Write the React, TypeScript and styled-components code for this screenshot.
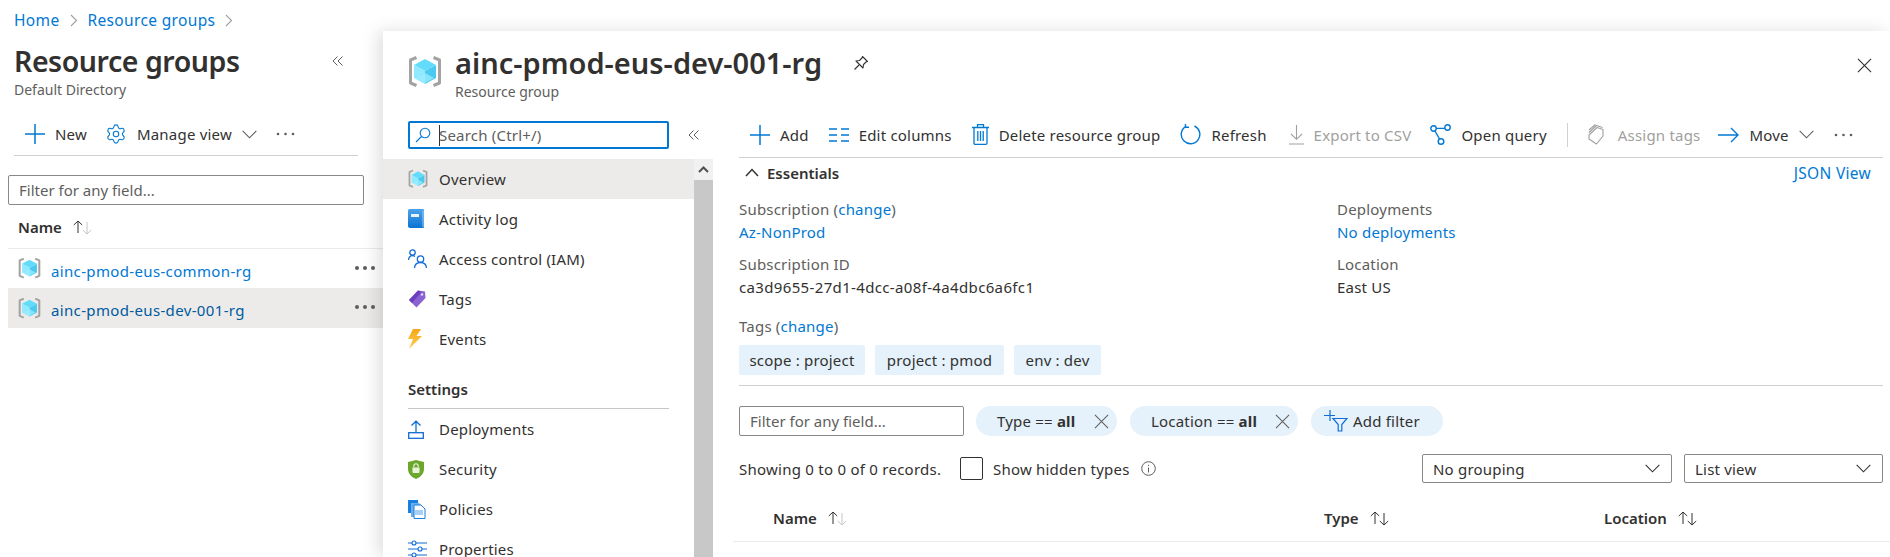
import React from "react";
import styled, { createGlobalStyle } from "styled-components";
import { Settings } from "lucide-react";

const FONT = `"Noto Sans", "Open Sans", sans-serif`;

const Global = createGlobalStyle`
  html, body { margin: 0; padding: 0; height: 557px; overflow: hidden; background: #fff; }
  body { font-family: ${FONT}; font-size: 15px; letter-spacing: 0.2px; color: #323130; }
  * { box-sizing: border-box; }
`;

const Page = styled.div`
  width: 1890px; height: 557px; display: flex; flex-direction: column; overflow: hidden;
`;
const Breadcrumb = styled.nav`
  height: 31px; padding: 9px 0 0 14px; display: flex; align-items: center; gap: 10px;
  font-size: 15.5px; letter-spacing: 0.35px; color: #0078d4; flex: none;
`;
const Main = styled.div`flex: 1; display: flex; min-height: 0;`;

/* left blade */
const LeftBlade = styled.aside`width: 383px; flex: none; display: flex; flex-direction: column;`;
const LeftHead = styled.div`
  padding: 10px 40px 0 14px; height: 50px; display: flex; align-items: center; justify-content: space-between;
`;
const BigTitle = styled.h1`
  margin: 0; font-size: 28.5px; line-height: 40px; font-weight: 600; letter-spacing: -0.45px; color: #323130; white-space: nowrap;
`;
const Sub = styled.div`
  font-size: 14px; line-height: 18px; letter-spacing: 0; color: #605e5c;
`;
const LeftSub = styled(Sub)`padding-left: 14px;`;
const LeftBar = styled.div`
  margin: 16px 25px 0 14px; height: 41px; padding: 0 0 2px 11px; border-bottom: 1px solid #d2d0ce;
  display: flex; align-items: center;
`;
const Tool = styled.div<{ $off?: boolean; $ml?: number; $gap?: number }>`
  display: flex; align-items: center; gap: ${p => p.$gap ?? 10}px; white-space: nowrap;
  color: ${p => (p.$off ? "#a19f9d" : "#323130")}; margin-left: ${p => p.$ml ?? 20}px;
`;
const Field = styled.div<{ $w: number }>`
  width: ${p => p.$w}px; height: 30px; border: 1px solid #8a8886; border-radius: 2px; flex: none;
  display: flex; align-items: center; padding-left: 10px; letter-spacing: 0; color: #605e5c; white-space: nowrap;
`;
const LeftField = styled(Field)`margin: 19px 0 0 8px;`;
const NameHead = styled.div`
  margin-left: 8px; height: 44px; border-bottom: 1px solid #edebe9; padding: 1px 0 0 10px; display: flex; align-items: center; gap: 10px;
  font-weight: 600; letter-spacing: 0; flex: none;
`;
const GroupRow = styled.div<{ $on?: boolean; $h: number }>`
  margin-left: 8px; height: ${p => p.$h}px; display: flex; align-items: center; padding: 0 8px 0 10px; gap: 10px;
  background: ${p => (p.$on ? "#edebe9" : "transparent")}; flex: none;
  color: ${p => (p.$on ? "#005a9e" : "#0078d4")}; letter-spacing: 0.35px;
`;
const GroupName = styled.span`flex: 1; padding-top: 4px;`;
const RowDots = styled.span`
  display: flex; gap: 4px; margin-bottom: 2px;
  & > i { width: 4px; height: 4px; border-radius: 50%; background: #605e5c; display: block; }
`;

/* resource panel */
const Panel = styled.section`
  flex: 1; min-width: 0; background: #fff; display: flex; flex-direction: column; box-shadow: -5px 0 16px rgba(0,0,0,.13); z-index: 2;
`;
const PanelHead = styled.header`
  height: 90px; flex: none; padding: 24px 18px 0 25px; display: flex; align-items: flex-start;
`;
const PanelTitles = styled.div`margin-left: 13px; margin-top: -12px;`;
const TitleLine = styled.div`display: flex; align-items: center; gap: 31px;`;
const PanelTitle = styled(BigTitle)`font-size: 29px; letter-spacing: 0;`;
const Spacer = styled.div`flex: 1;`;
const CloseSlot = styled.div`margin-top: 2px;`;
const PanelBody = styled.div`flex: 1; display: flex; min-height: 0;`;

const Side = styled.div`width: 330px; flex: none; display: flex; flex-direction: column; min-height: 0;`;
const SearchRow = styled.div`height: 38px; flex: none; display: flex; padding: 0 0 10px 25px; align-items: center; gap: 19px;`;
const SearchBox = styled.div`
  width: 261px; height: 28px; border: 2px solid #0078d4; border-radius: 2px; display: flex; align-items: center; padding-left: 5px;
  color: #605e5c;
`;
const Caret = styled.span`width: 1px; height: 21px; background: #323130; margin: 0 -1px 0 8px;`;
const SideScroll = styled.div`flex: 1; display: flex; min-height: 0; overflow: hidden;`;
const Menu = styled.ul`margin: 0; padding: 0; list-style: none; flex: 1; min-width: 0;`;
const MenuItem = styled.li<{ $on?: boolean }>`
  height: 40px; display: flex; align-items: center; padding-left: 25px; gap: 10px;
  background: ${p => (p.$on ? "#edebe9" : "transparent")}; color: #323130;
`;
const MenuIconBox = styled.span`width: 21px; flex: none; display: flex; justify-content: flex-start; align-items: center;`;
const MenuHeading = styled.li`
  height: 50px; margin: 0 25px; padding-top: 20px; border-bottom: 1px solid #c8c6c4;
  line-height: 20px; font-weight: 600; letter-spacing: 0;
`;
const Scrollbar = styled.div`width: 19px; flex: none; display: flex; flex-direction: column; background: #c8c8c8;`;
const ScrollBtn = styled.div`height: 21px; background: #f1f1f1; display: flex; align-items: center; justify-content: center;`;

const Content = styled.div`flex: 1; min-width: 0; padding: 0 7px 0 26px; display: flex; flex-direction: column;`;
const TopBar = styled.div`
  height: 37px; flex: none; padding: 0 0 9px 11px; border-bottom: 1px solid #d2d0ce; display: flex; align-items: center;
`;
const Separator = styled.span`width: 1px; height: 24px; background: #d2d0ce; margin-left: 20px;`;
const EssHead = styled.div`
  height: 32px; flex: none; display: flex; align-items: center; padding: 0 12px 3px 6px; font-weight: 600; letter-spacing: 0; gap: 8px;
`;
const Link = styled.a`color: #0078d4; text-decoration: none; font-weight: 400;`;
const JsonLink = styled(Link)`font-size: 15.5px; letter-spacing: 0.3px;`;
const EssGrid = styled.div`
  margin-top: 8px; display: grid; grid-template-columns: 598px 1fr; row-gap: 9px; flex: none;
`;
const Pair = styled.div`
  display: flex; flex-direction: column; line-height: 23px; height: 46px;
`;
const Label = styled.div`color: #605e5c; white-space: nowrap;`;
const Value = styled.div<{ $wide?: boolean }>`
  color: #323130; white-space: nowrap; letter-spacing: ${p => (p.$wide ? "0.35px" : "inherit")};
`;
const TagsLabel = styled(Label)`margin-top: 16px; line-height: 23px;`;
const TagRow = styled.div`margin-top: 7px; display: flex; gap: 10px; flex: none;`;
const Tag = styled.span<{ $w: number }>`
  width: ${p => p.$w}px; height: 30px; background: #e5f1fb; border-radius: 2px; display: flex; align-items: center; justify-content: center;
  color: #323130; white-space: nowrap;
`;
const Rule = styled.div`margin-top: 10px; height: 1px; background: #d2d0ce; flex: none;`;
const FilterRow = styled.div`margin-top: 20px; display: flex; align-items: center; flex: none;`;
const Pill = styled.span<{ $w: number; $ml: number }>`
  width: ${p => p.$w}px; margin-left: ${p => p.$ml}px; height: 30px; border-radius: 15px; background: #e5f1fb; flex: none;
  display: flex; align-items: center; padding: 0 8px 0 21px; justify-content: space-between;
  color: #323130; white-space: nowrap;
`;
const AddPill = styled(Pill)`justify-content: flex-start; padding-left: 13px; gap: 5px;`;
const Strong = styled.b`font-weight: 700;`;
const CountRow = styled.div`margin-top: 18px; height: 29px; display: flex; align-items: center; flex: none;`;
const CountText = styled.span`letter-spacing: 0.25px; white-space: nowrap; width: 221px; flex: none;`;
const Check = styled.span`width: 23px; height: 23px; border: 1px solid #323130; border-radius: 2px; flex: none;`;
const CheckLabel = styled.span`margin-left: 10px; white-space: nowrap;`;
const InfoSlot = styled.span`margin-left: 11px; display: flex; flex: 1;`;
const Select = styled.div<{ $w: number; $ml?: number }>`
  width: ${p => p.$w}px; height: 29px; margin-left: ${p => p.$ml ?? 0}px; flex: none; border: 1px solid #8a8886; border-radius: 2px;
  display: flex; align-items: center; justify-content: space-between; padding: 0 11px 0 10px;
`;
const TableHead = styled.div`
  margin: 21px -7px 0 -6px; height: 38px; border-bottom: 1px solid #edebe9; padding: 0 0 9px 40px; flex: none;
  display: grid; grid-template-columns: 551px 280px 1fr; align-items: center;
  font-weight: 600; letter-spacing: 0;
`;
const HeadCell = styled.span`display: flex; align-items: center; gap: 10px;`;

/* icons */
const Cube = ({ s = 34 }: { s?: number }) => (
  <svg width={s} height={s * 33 / 34} viewBox="0 0 34 33" fill="none">
    <path d="M8.500 2.500 2.500 5v23l6 2.500" stroke="#a3a3a3" strokeWidth="3" strokeLinejoin="round" />
    <path d="M25.500 2.500 31.500 5v23l-6 2.500" stroke="#a3a3a3" strokeWidth="3" strokeLinejoin="round" />
    <path d="M17 4 28 10 17 16 6 10Z" fill="#62dcfa" />
    <path d="M6 10 17 16V29L6 23Z" fill="#8fe9ff" />
    <path d="M28 10 17 16V29L28 23Z" fill="#4cc9ee" />
    <path d="M17 18 26 23 17 28 8 23Z" fill="#9cecff" opacity=".75" />
  </svg>
);
const Plus = () => (
  <svg width="20" height="20" viewBox="0 0 20 20"><path d="M10 0v20M0 10h20" stroke="#0078d4" strokeWidth="1.500" /></svg>
);
const Chev = ({ color = "#605e5c", w = 15 }: { color?: string; w?: number }) => (
  <svg width={w} height="9" viewBox="0 0 16 9" fill="none"><path d="M.7.7 8 8l7.300-7.300" stroke={color} strokeWidth="1.200" /></svg>
);
const Dots = ({ color = "#605e5c" }: { color?: string }) => (
  <svg width="19" height="4" viewBox="0 0 19 4"><circle cx="2" cy="2" r="1.300" fill={color} /><circle cx="9.500" cy="2" r="1.300" fill={color} /><circle cx="17" cy="2" r="1.300" fill={color} /></svg>
);
const DoubleLeft = () => (
  <svg width="11" height="10" viewBox="0 0 11 10" fill="none"><path d="M5.500.5 1 5l4.500 4.500M10.500.5 6 5l4.500 4.500" stroke="#605e5c" strokeWidth="1" /></svg>
);
const Crumb = () => (
  <svg width="8" height="13" viewBox="0 0 8 13" fill="none"><path d="m1 1 5.500 5.500L1 12" stroke="#a19f9d" strokeWidth="1.100" /></svg>
);
const Sort = ({ downColor = "#c8c6c4" }: { downColor?: string }) => (
  <svg width="21" height="15" viewBox="0 0 21 15" fill="none">
    <path d="M6 13V1M1.800 5 6 1l4.200 4" stroke="#323130" strokeWidth="1" />
    <path d="M15 2v12M10.800 10 15 14l4.200-4" stroke={downColor} strokeWidth="1" />
  </svg>
);
const XIcon = ({ s, color, w = 1.200 }: { s: number; color: string; w?: number }) => (
  <svg width={s} height={s} viewBox="0 0 16 16" fill="none"><path d="m1 1 14 14M15 1 1 15" stroke={color} strokeWidth={w} /></svg>
);
const Pin = () => (
  <svg width="16" height="16" viewBox="0 0 16 16" fill="none" stroke="#323130" strokeWidth="1.100">
    <path d="M9.500 1.500 14.500 6.500 13 7 10.500 9.500 10 13 3 6 6.500 5.500 9 3Z" strokeLinejoin="round" /><path d="M6 10 1.500 14.500" />
  </svg>
);
const SearchIcon = () => (
  <svg width="16" height="16" viewBox="0 0 16 16" fill="none" stroke="#0078d4" strokeWidth="1.100"><circle cx="10" cy="6" r="4.800" /><path d="M6.500 9.500 1 15" /></svg>
);
const Book = () => (
  <svg width="16" height="20" viewBox="0 0 16 20">
    <defs><linearGradient id="bk" x1="0" y1="0" x2="0" y2="1"><stop offset="0" stopColor="#4ba3ec" /><stop offset="1" stopColor="#0c72d2" /></linearGradient></defs>
    <path d="M1.500 0H15a1 1 0 0 1 1 1v17a1 1 0 0 1-1 1H2a2 2 0 0 1-2-2V1.500A1.500 1.500 0 0 1 1.500 0Z" fill="url(#bk)" />
    <path d="M15 1.500V18" stroke="#9fd0f5" strokeWidth="1" /><rect x="3" y="5" width="8" height="3" fill="#e8f3fc" />
  </svg>
);
const People = () => (
  <svg width="20" height="20" viewBox="0 0 20 20" fill="none" stroke="#0f6cd8" strokeWidth="1.300">
    <circle cx="4.500" cy="3.500" r="2.700" /><path d="M.5 11c.3-3 2-4.300 4-4.300 1 0 1.800.3 2.500.9" />
    <circle cx="12.500" cy="10" r="3.200" /><path d="M6.500 19c.3-3.800 2.800-5.500 6-5.500s5.700 1.700 6 5.500" />
  </svg>
);
const TagIcon = () => (
  <svg width="18" height="18" viewBox="0 0 18 18">
    <path d="M10 .5 17 1.500 17.500 8 8.500 17.500 1 10Z" fill="#8a62d1" />
    <path d="M10 .5 1 10 4 13 13.500 2Z" fill="#6d3fc0" />
    <circle cx="14" cy="4.500" r="1.200" fill="#e9defa" />
  </svg>
);
const Bolt = () => (
  <svg width="14" height="20" viewBox="0 0 14 20">
    <defs><linearGradient id="bl" x1="0" y1="0" x2="0" y2="1"><stop offset="0" stopColor="#f7a614" /><stop offset="1" stopColor="#ffd05a" /></linearGradient></defs>
    <path d="M5 0h8L8.500 7H14L1 20l4-10H0Z" fill="url(#bl)" />
  </svg>
);
const Upload = () => (
  <svg width="16" height="19" viewBox="0 0 16 19" fill="none" stroke="#0f6cd8" strokeWidth="1.300">
    <rect x=".7" y="12.700" width="14.600" height="5.600" /><path d="M8 12V1.500M3.500 5.500 8 1.200l4.500 4.300" />
  </svg>
);
const Shield = () => (
  <svg width="16" height="19" viewBox="0 0 16 19">
    <path d="M8 0 16 2v7c0 5-4 8.500-8 10-4-1.500-8-5-8-10V2Z" fill="#6aa72c" />
    <rect x="4.500" y="7.500" width="7" height="5.500" rx=".7" fill="#eaf4dc" />
    <path d="M5.800 7.500V6a2.200 2.200 0 0 1 4.400 0v1.500" fill="none" stroke="#eaf4dc" strokeWidth="1.100" />
  </svg>
);
const Policy = () => (
  <svg width="18" height="19" viewBox="0 0 18 19">
    <rect x="0" y="0" width="10" height="13" fill="#1b7fe0" />
    <path d="M3 3h8l3 3v11H3Z" fill="#6eb0ee" />
    <path d="M6 5h7l4 4v9.500H6Z" fill="#fff" stroke="#1b7fe0" />
    <rect x="7" y="10" width="8" height="5" fill="#a8cff4" />
  </svg>
);
const Sliders = () => (
  <svg width="19" height="18" viewBox="0 0 19 18" fill="none" stroke="#0f6cd8" strokeWidth="1.100">
    <path d="M0 3h4M8 3h11M0 9h10M14 9h5M0 15h4M8 15h11" />
    <circle cx="6" cy="3" r="2" /><circle cx="12" cy="9" r="2" /><circle cx="6" cy="15" r="2" />
  </svg>
);
const Columns = () => (
  <svg width="20" height="14" viewBox="0 0 20 14" stroke="#0078d4" strokeWidth="1.300"><path d="M0 1h8M12 1h8M0 7h8M12 7h8M0 13h8M12 13h8" /></svg>
);
const Trash = () => (
  <svg width="17" height="21" viewBox="0 0 17 21" fill="none" stroke="#0078d4" strokeWidth="1.300">
    <path d="M0 3.500h17M5.500 3.200V.7h6v2.500M2 3.500V19a1.300 1.300 0 0 0 1.300 1.300h10.400A1.300 1.300 0 0 0 15 19V3.500M5.800 7v10M8.500 7v10M11.200 7v10" />
  </svg>
);
const Refresh = () => (
  <svg width="21" height="21" viewBox="0 0 21 21" fill="none" stroke="#0078d4" strokeWidth="1.400">
    <path d="M14.500 2A9.300 9.300 0 1 1 5.500 2.600" /><path d="M5.500 0v3.200H9" />
  </svg>
);
const Download = () => (
  <svg width="15" height="20" viewBox="0 0 15 20" fill="none" stroke="#a19f9d" strokeWidth="1.100"><path d="M7.500 0v14M2 9l5.500 5.300L13 9M0 19h15" /></svg>
);
const Query = () => (
  <svg width="21" height="21" viewBox="0 0 21 21" fill="none" stroke="#0078d4" strokeWidth="1.400">
    <circle cx="3.500" cy="4.500" r="2.700" /><circle cx="17.500" cy="3.500" r="2.700" /><circle cx="11" cy="17.500" r="2.800" />
    <path d="M6.200 4.400h8.600M5 7l4.500 8" />
  </svg>
);
const TagsOutline = () => (
  <svg width="17" height="21" viewBox="0 0 17 21" fill="none" stroke="#a19f9d" strokeWidth="1.100" strokeLinejoin="round">
    <path d="M1 11 9 3.500l6 2V12l-6.500 8L1 15Z" />
    <path d="M1 8.500 8.500 1.500l6 2M1 6 7.500.5" />
  </svg>
);
const ArrowRight = () => (
  <svg width="21" height="16" viewBox="0 0 21 16" fill="none" stroke="#0078d4" strokeWidth="1.400"><path d="M0 8h20M13 1l7 7-7 7" /></svg>
);
const UpCaret = () => (
  <svg width="11" height="7" viewBox="0 0 11 7" fill="none" stroke="#505050" strokeWidth="2"><path d="M1 6l4.500-4.500L10 6" /></svg>
);
const UpChev = () => (
  <svg width="14" height="9" viewBox="0 0 14 9" fill="none" stroke="#323130" strokeWidth="1.500"><path d="M1 8l6-6.500L13 8" /></svg>
);
const Info = () => (
  <svg width="15" height="15" viewBox="0 0 15 15" fill="none" stroke="#605e5c" strokeWidth="1"><circle cx="7.500" cy="7.500" r="6.800" /><path d="M7.500 6.500v5M7.500 3.800v1.200" /></svg>
);
const FunnelPlus = () => (
  <svg width="24" height="22" viewBox="0 0 24 22" fill="none" stroke="#0f6cd8" strokeWidth="1.200">
    <path d="M6 0v11M0 5.500h11" /><path d="M9 8.500h14l-5.200 6v6.500h-3.600v-6.500Z" />
  </svg>
);

const Pack = styled.span`display: flex; align-items: center; flex: none;`;

const menu: [React.ReactNode, string, boolean?][] = [
  [<Cube s={20} />, "Overview", true],
  [<Book />, "Activity log"],
  [<People />, "Access control (IAM)"],
  [<TagIcon />, "Tags"],
  [<Bolt />, "Events"],
];
const settingsMenu: [React.ReactNode, string][] = [
  [<Upload />, "Deployments"],
  [<Shield />, "Security"],
  [<Policy />, "Policies"],
  [<Sliders />, "Properties"],
];

export default function App() {
  return (
    <Page>
      <Global />
      <Breadcrumb>
        <span>Home</span><Crumb /><span>Resource groups</span><Crumb />
      </Breadcrumb>
      <Main>
        <LeftBlade>
          <LeftHead><BigTitle>Resource groups</BigTitle><DoubleLeft /></LeftHead>
          <LeftSub>Default Directory</LeftSub>
          <LeftBar>
            <Tool $ml={0}><Plus />New</Tool>
            <Tool $ml={18}><Pack><Settings size={22} color="#0078d4" strokeWidth={1.2} /></Pack>Manage view<Chev /></Tool>
            <Tool $ml={19}><Dots /></Tool>
          </LeftBar>
          <LeftField $w={356}>Filter for any field...</LeftField>
          <NameHead>Name<Sort /></NameHead>
          <GroupRow $h={39}><Cube s={23} /><GroupName>ainc-pmod-eus-common-rg</GroupName><RowDots><i /><i /><i /></RowDots></GroupRow>
          <GroupRow $h={40} $on><Cube s={23} /><GroupName>ainc-pmod-eus-dev-001-rg</GroupName><RowDots><i /><i /><i /></RowDots></GroupRow>
        </LeftBlade>
        <Panel>
          <PanelHead>
            <Cube />
            <PanelTitles>
              <TitleLine><PanelTitle>ainc-pmod-eus-dev-001-rg</PanelTitle><Pin /></TitleLine>
              <Sub>Resource group</Sub>
            </PanelTitles>
            <Spacer />
            <CloseSlot><XIcon s={15} color="#323130" /></CloseSlot>
          </PanelHead>
          <PanelBody>
            <Side>
              <SearchRow>
                <SearchBox><SearchIcon /><Caret />Search (Ctrl+/)</SearchBox>
                <DoubleLeft />
              </SearchRow>
              <SideScroll>
                <Menu>
                  {menu.map(([ic, t, on]) => <MenuItem key={t} $on={on}><MenuIconBox>{ic}</MenuIconBox>{t}</MenuItem>)}
                  <MenuHeading>Settings</MenuHeading>
                  {settingsMenu.map(([ic, t]) => <MenuItem key={t}><MenuIconBox>{ic}</MenuIconBox>{t}</MenuItem>)}
                </Menu>
                <Scrollbar><ScrollBtn><UpCaret /></ScrollBtn></Scrollbar>
              </SideScroll>
            </Side>
            <Content>
              <TopBar>
                <Tool $ml={0}><Plus />Add</Tool>
                <Tool><Columns />Edit columns</Tool>
                <Tool><Trash />Delete resource group</Tool>
                <Tool><Refresh />Refresh</Tool>
                <Tool $off $ml={22}><Download />Export to CSV</Tool>
                <Tool $ml={19}><Query />Open query</Tool>
                <Separator />
                <Tool $off $gap={13}><TagsOutline />Assign tags</Tool>
                <Tool $ml={18}><ArrowRight />Move<Chev /></Tool>
                <Tool><Dots /></Tool>
              </TopBar>
              <EssHead><UpChev />Essentials<Spacer /><JsonLink>JSON View</JsonLink></EssHead>
              <EssGrid>
                <Pair><Label>Subscription (<Link>change</Link>)</Label><Value><Link>Az-NonProd</Link></Value></Pair>
                <Pair><Label>Deployments</Label><Value><Link>No deployments</Link></Value></Pair>
                <Pair><Label>Subscription ID</Label><Value $wide>ca3d9655-27d1-4dcc-a08f-4a4dbc6a6fc1</Value></Pair>
                <Pair><Label>Location</Label><Value>East US</Value></Pair>
              </EssGrid>
              <TagsLabel>Tags (<Link>change</Link>)</TagsLabel>
              <TagRow>
                <Tag $w={126}>scope : project</Tag>
                <Tag $w={129}>project : pmod</Tag>
                <Tag $w={87}>env : dev</Tag>
              </TagRow>
              <Rule />
              <FilterRow>
                <Field $w={225}>Filter for any field...</Field>
                <Pill $w={141} $ml={12}><span>Type == <Strong>all</Strong></span><XIcon s={15} color="#605e5c" w={1.100} /></Pill>
                <Pill $w={168} $ml={13}><span>Location == <Strong>all</Strong></span><XIcon s={15} color="#605e5c" w={1.100} /></Pill>
                <AddPill $w={132} $ml={13}><FunnelPlus />Add filter</AddPill>
              </FilterRow>
              <CountRow>
                <CountText>Showing 0 to 0 of 0 records.</CountText>
                <Check /><CheckLabel>Show hidden types</CheckLabel>
                <InfoSlot><Info /></InfoSlot>
                <Select $w={250}>No grouping<Chev color="#323130" /></Select>
                <Select $w={199} $ml={12}>List view<Chev color="#323130" /></Select>
              </CountRow>
              <TableHead>
                <HeadCell>Name<Sort /></HeadCell>
                <HeadCell>Type<Sort downColor="#323130" /></HeadCell>
                <HeadCell>Location<Sort downColor="#323130" /></HeadCell>
              </TableHead>
            </Content>
          </PanelBody>
        </Panel>
      </Main>
    </Page>
  );
}
